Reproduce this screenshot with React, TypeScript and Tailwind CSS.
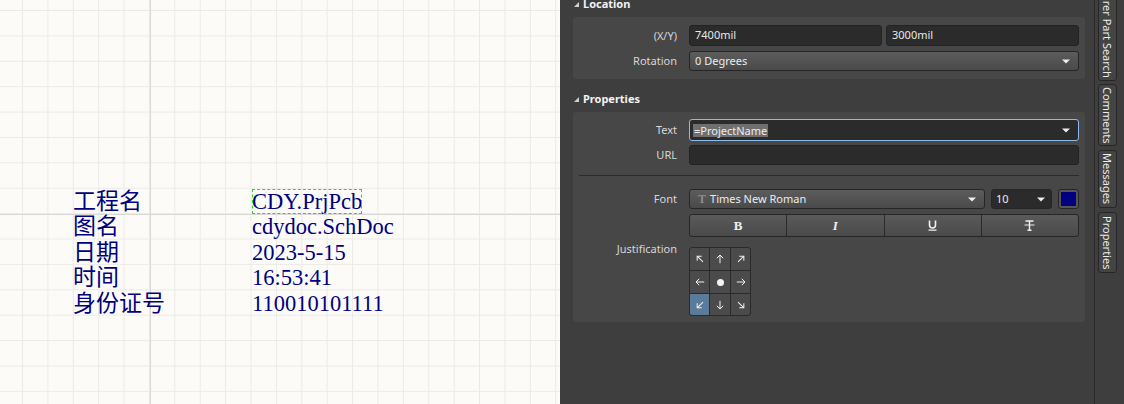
import React from 'react';

const rows: [string, string][] = [
  ['工程名', 'CDY.PrjPcb'],
  ['图名', 'cdydoc.SchDoc'],
  ['日期', '2023-5-15'],
  ['时间', '16:53:41'],
  ['身份证号', '110010101111'],
];

// rotation of the arrow in each justification cell, null = centre dot
const arrows: (number | null)[] = [-45, 0, 45, -90, null, 90, -135, 180, 135];

function Caret() {
  return (
    <svg width="8" height="5" viewBox="0 0 8 5" className="shrink-0">
      <path d="M0 0.5h8L4 4.5z" fill="#eeeeee" />
    </svg>
  );
}

function JustArrow({ angle }: { angle: number }) {
  return (
    <svg width="10" height="10" viewBox="0 0 10 10">
      <g transform={`rotate(${angle} 5 5)`} stroke="#f2f2f2" strokeWidth="1" fill="none">
        <path d="M5 9.2V1" />
        <path d="M1.8 4.2L5 1l3.2 3.2" />
      </g>
    </svg>
  );
}

function SectionHeader({ title, className = '' }: { title: string; className?: string }) {
  return (
    <div className={`flex h-[33px] items-end gap-[4px] pb-[6px] pl-[14px] ${className}`}>
      <svg width="5" height="5" viewBox="0 0 5 5" className="mb-[4px]">
        <path d="M5 0V5H0z" fill="#cfcfcf" />
      </svg>
      <span className="text-[11px] leading-[14px] font-bold text-[#f2f2f2]">{title}</span>
    </div>
  );
}

function Field({
  label,
  children,
  alignTop,
}: {
  label: string;
  children: React.ReactNode;
  alignTop?: boolean;
}) {
  return (
    <div className={`flex gap-[12px] ${alignTop ? 'items-start' : 'items-center'}`}>
      <div
        className={`w-[104px] shrink-0 text-right text-[11px] leading-[14px] text-[#d6d6d6] ${
          alignTop ? '-mt-[5px]' : ''
        }`}
      >
        {label}
      </div>
      <div className="flex-1">{children}</div>
    </div>
  );
}

const darkInput =
  'flex items-center rounded-[3px] border border-[#232323] bg-[#2b2b2b] px-[5px] text-[11px] text-[#e8e8e8]';
const dropBtn =
  'flex items-center rounded-[3px] border border-[#262626] bg-linear-to-b from-[#5c5c5c] to-[#4a4a4a] text-[11px] text-[#ececec]';

function Tab({ label, className = '' }: { label: string; className?: string }) {
  return (
    <div
      className={`flex w-[19px] shrink-0 justify-center rounded-[3px] border border-[#262626] bg-[#444444] ${className}`}
    >
      <span className="[writing-mode:vertical-rl] text-[11px] leading-[17px] text-[#ececec] whitespace-nowrap">
        {label}
      </span>
    </div>
  );
}

export default function App() {
  return (
    <div className="flex h-[404px] w-[1124px] overflow-hidden font-['Noto_Sans',sans-serif]">
      {/* Schematic canvas */}
      <div className="h-full w-[560px] shrink-0 bg-[#fcfbf7] bg-[linear-gradient(to_right,transparent_150px,#d8d8d4_150px,#d8d8d4_151px,transparent_151px),linear-gradient(to_bottom,transparent_214px,#d8d8d4_214px,#d8d8d4_215px,transparent_215px),linear-gradient(to_right,#ebeae6_1px,transparent_1px),linear-gradient(to_bottom,#ebeae6_1px,transparent_1px)] bg-[size:100%_100%,100%_100%,25.4px_25.4px,25.4px_25.4px] bg-[position:0_0,0_0,22px_10px,22px_10px] pl-[73px] pt-[187px] text-[#000080]">
        {rows.map(([k, v], i) => (
          <div key={k} className="flex h-[25.4px] items-baseline">
            <span className="w-[179px] shrink-0 font-['Noto_Sans_CJK_SC',sans-serif] text-[23px] leading-[25.4px]">
              {k}
            </span>
            <span
              className={`font-['Liberation_Serif',serif] text-[22.5px] leading-[25.4px] ${
                i === 0 ? 'inline-block outline-1 -outline-offset-1 outline-dashed outline-[#22dd22]' : ''
              }`}
            >
              {v}
            </span>
          </div>
        ))}
      </div>

      {/* Properties panel */}
      <div className="flex h-full flex-1 bg-[#3e3e3e]">
        <div className="w-[535px] shrink-0 border-r border-[#2a2a2a]">
          <SectionHeader title="Location" className="-mt-[16px]" />
          <div className="ml-[13px] mr-[9px] flex flex-col gap-[5px] rounded-[3px] bg-[#474747] pb-[8px] pr-[6px] pt-[8px]">
            <Field label="(X/Y)">
              <div className="flex gap-[4px]">
                <div className={`${darkInput} h-[21px] flex-1`}>7400mil</div>
                <div className={`${darkInput} h-[21px] flex-1`}>3000mil</div>
              </div>
            </Field>
            <Field label="Rotation">
              <div className={`${dropBtn} h-[20px] justify-between pl-[5px] pr-[8px]`}>
                <span>0 Degrees</span>
                <Caret />
              </div>
            </Field>
          </div>

          <SectionHeader title="Properties" />
          <div className="ml-[13px] mr-[9px] flex flex-col rounded-[3px] bg-[#474747] pb-[6px] pr-[6px] pt-[7px]">
            <Field label="Text">
              <div className="flex h-[22px] items-center justify-between rounded-[3px] border border-[#8bbbe8] bg-[#2b2b2b] pl-[3px] pr-[8px] text-[11px] text-[#ececec]">
                <span className="bg-[#6f6f6f] px-px leading-[13px]">=ProjectName</span>
                <Caret />
              </div>
            </Field>
            <div className="mt-[4px]">
              <Field label="URL">
                <div className={`${darkInput} h-[20px]`} />
              </Field>
            </div>
            <div className="ml-[6px] mt-[10px] h-px bg-[#2c2c2c]" />
            <div className="mt-[13px]">
              <Field label="Font">
                <div className="flex h-[20px] gap-[6px]">
                  <div className={`${dropBtn} w-[296px] shrink-0 justify-between pl-[8px] pr-[8px]`}>
                    <span className="flex items-center gap-[4px]">
                      <span className="font-['Liberation_Serif',serif] text-[12px] font-bold text-[#8c8c8c]">T</span>
                      <span>Times New Roman</span>
                    </span>
                    <Caret />
                  </div>
                  <div className="flex w-[61px] shrink-0 items-center justify-between rounded-[3px] border border-[#262626] bg-[#2b2b2b] pl-[4px] pr-[6px] text-[11px] text-[#ececec]">
                    <span>10</span>
                    <Caret />
                  </div>
                  <div className="flex flex-1 items-center justify-center rounded-[3px] border border-[#262626] bg-[#555555] p-[2px]">
                    <div className="h-full w-full bg-[#000080]" />
                  </div>
                </div>
              </Field>
            </div>
            <div className="mt-[5px]">
              <Field label="">
                <div className="flex h-[23px] overflow-hidden rounded-[3px] border border-[#262626] bg-linear-to-b from-[#5a5a5a] to-[#4a4a4a] text-[#f0f0f0]">
                  <div className="flex flex-1 items-center justify-center border-r border-[#2a2a2a] font-['Liberation_Serif',serif] text-[13px] font-bold">
                    B
                  </div>
                  <div className="flex flex-1 items-center justify-center border-r border-[#2a2a2a] font-['Liberation_Serif',serif] text-[13px] font-bold italic">
                    I
                  </div>
                  <div className="flex flex-1 items-center justify-center border-r border-[#2a2a2a]">
                    <svg width="9" height="11" viewBox="0 0 9 11">
                      <path d="M1.5 0.5v4.5a3 3 0 0 0 6 0V0.5" fill="none" stroke="#f0f0f0" strokeWidth="1.6" />
                      <path d="M0.5 10.2h8" stroke="#f0f0f0" strokeWidth="1.2" />
                    </svg>
                  </div>
                  <div className="flex flex-1 items-center justify-center">
                    <svg width="11" height="11" viewBox="0 0 11 11">
                      <path d="M1.5 1h8M5.5 1v9.5M3.5 10.2h4" stroke="#f0f0f0" strokeWidth="1.4" fill="none" />
                      <path d="M0.5 5h10" stroke="#f0f0f0" strokeWidth="1.1" />
                    </svg>
                  </div>
                </div>
              </Field>
            </div>
            <div className="mt-[10px]">
              <Field label="Justification" alignTop>
                <div className="grid w-[62px] grid-cols-[19px_20px_19px] grid-rows-[22px_22px_21px] gap-px overflow-hidden rounded-[3px] border border-[#2a2a2a] bg-[#2a2a2a]">
                  {arrows.map((a, i) => (
                    <div
                      key={i}
                      className={`flex items-center justify-center ${i === 6 ? 'bg-[#5b7b9a]' : 'bg-[#4b4b4b]'}`}
                    >
                      {a === null ? (
                        <div className="h-[7px] w-[7px] rounded-full bg-[#f4f4f4]" />
                      ) : (
                        <JustArrow angle={a} />
                      )}
                    </div>
                  ))}
                </div>
              </Field>
            </div>
          </div>
        </div>

        {/* Side tabs */}
        <div className="flex w-[28px] shrink-0 flex-col gap-[3px] overflow-hidden pl-[3px]">
          <Tab label="Manufacturer Part Search" className="-mt-[90px] h-[171px] items-end pb-[2px]" />
          <Tab label="Comments" className="h-[62px] items-center" />
          <Tab label="Messages" className="mt-[1px] h-[58px] items-center" />
          <Tab label="Properties" className="mt-[1px] h-[61px] items-center" />
        </div>
      </div>
    </div>
  );
}
